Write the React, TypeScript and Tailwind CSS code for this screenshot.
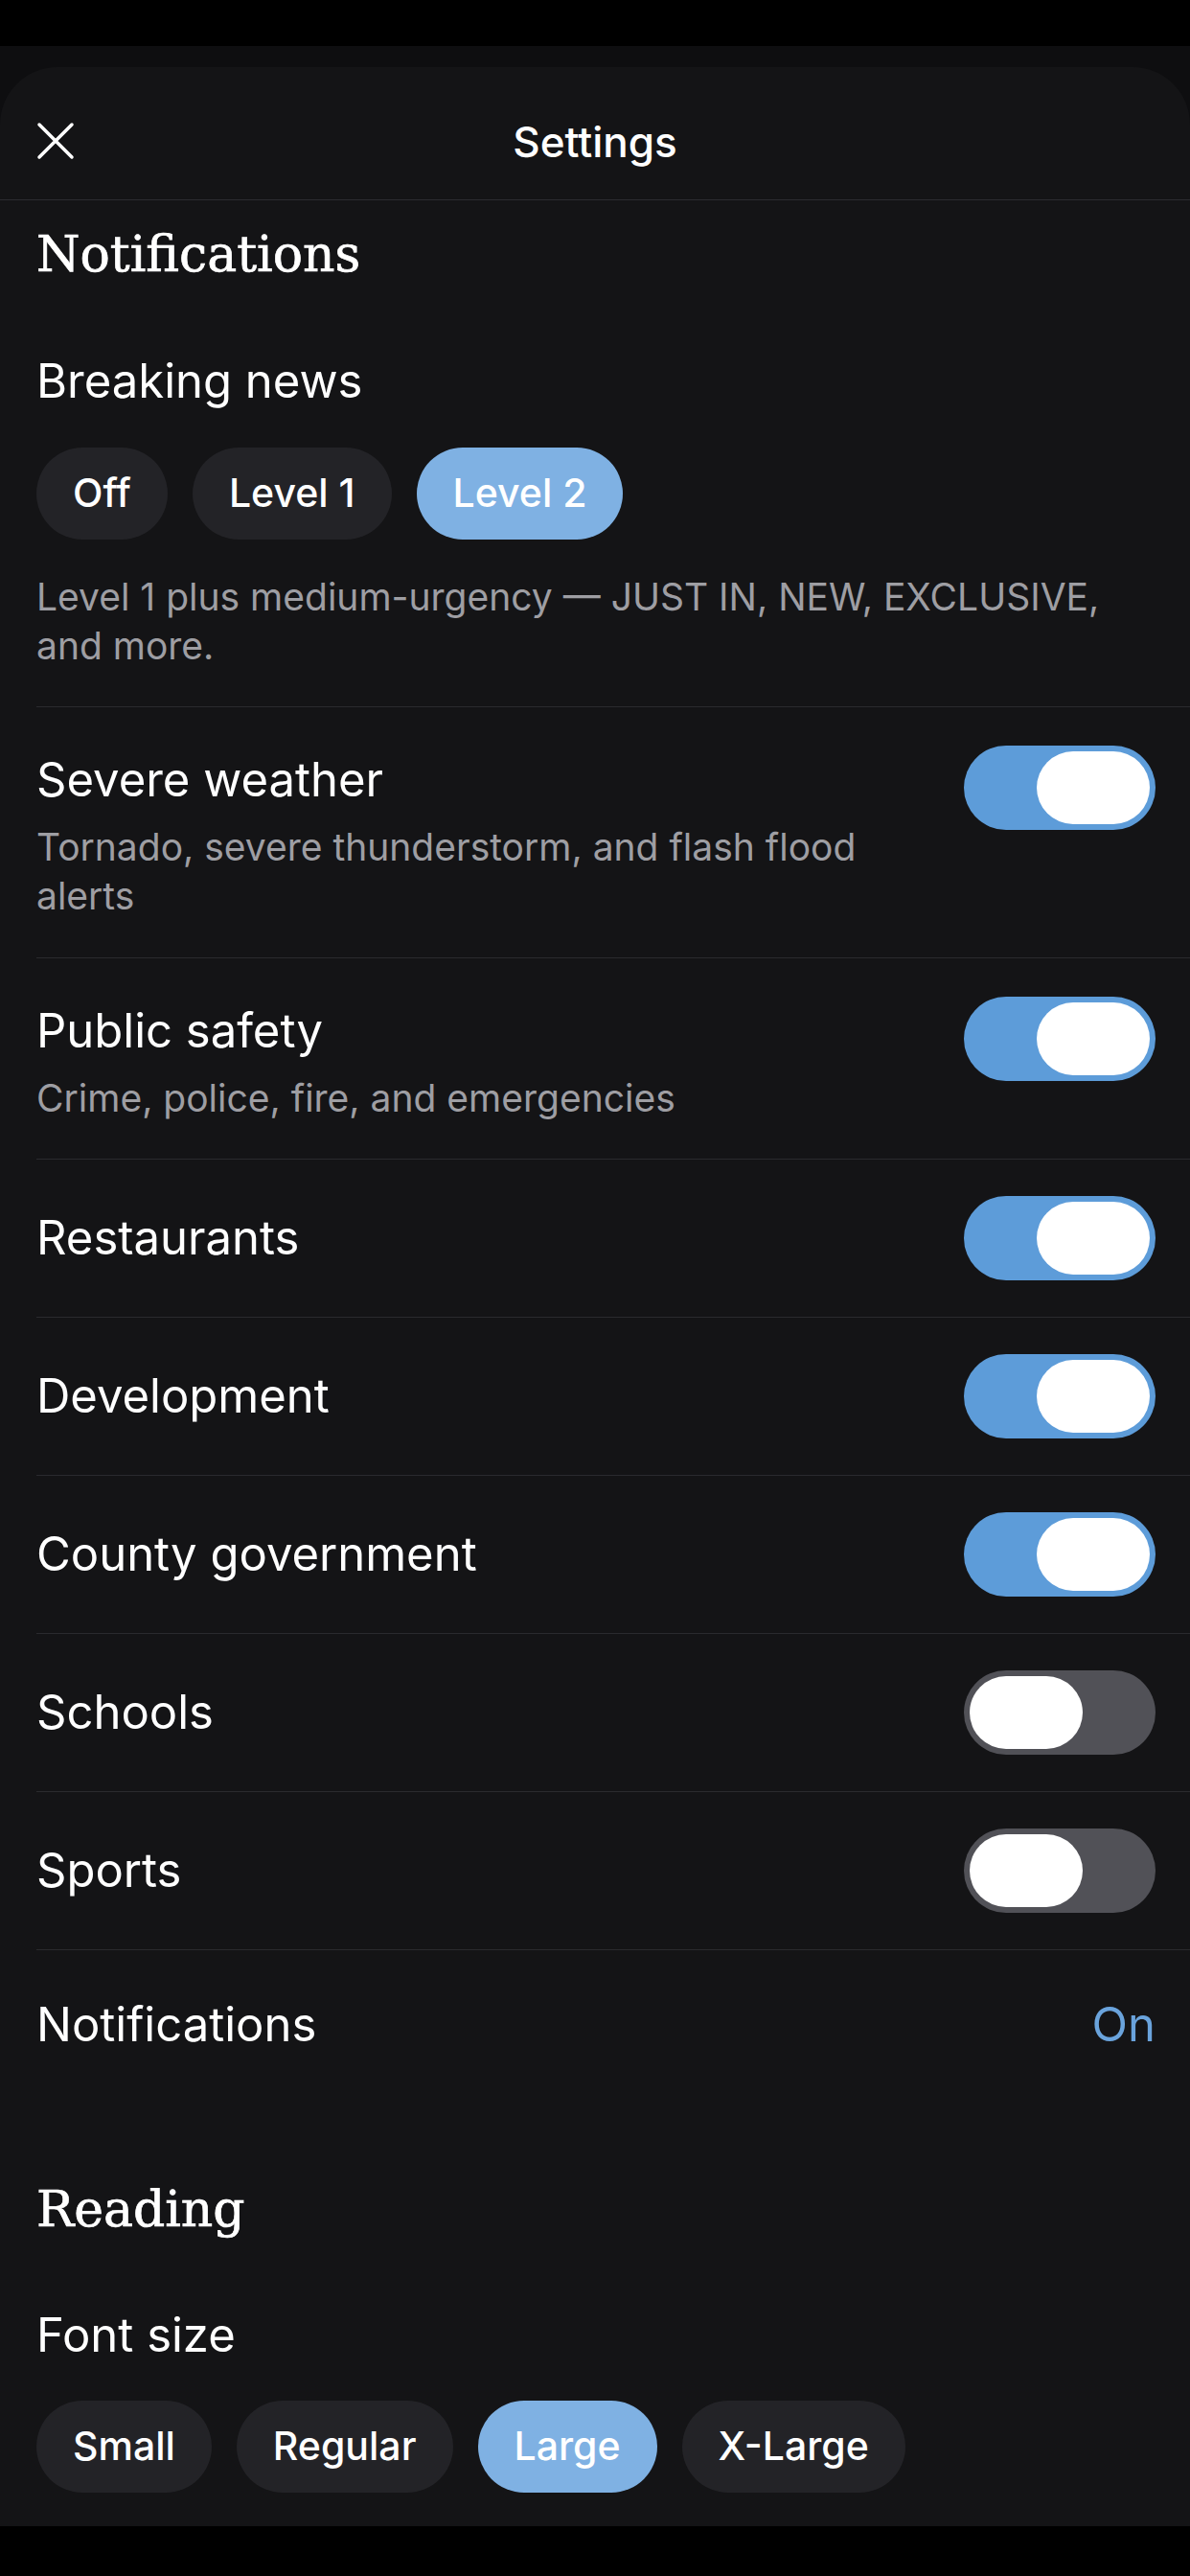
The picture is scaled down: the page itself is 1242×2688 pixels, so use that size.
import { useState } from 'react';

const sans = { fontFamily: 'Inter, "Noto Sans", sans-serif' };
const serif = { fontFamily: '"DejaVu Serif", serif' };

function Toggle({ on }: { on: boolean }) {
  return (
    <div
      className={`flex h-[88px] w-[200px] shrink-0 items-center rounded-full px-[6px] ${
        on ? 'justify-end bg-[#5d9cd9]' : 'justify-start bg-[#515157]'
      }`}
    >
      <div className="h-[76px] w-[118px] rounded-full bg-white" />
    </div>
  );
}

function Pills({ items, active }: { items: string[]; active: string }) {
  return (
    <div className="flex gap-[26px]">
      {items.map((item) => (
        <div
          key={item}
          className={`flex h-[96px] items-center rounded-full px-[38px] text-[41px] font-medium text-white ${
            item === active ? 'bg-[#7fb1e3]' : 'bg-[#232327]'
          }`}
        >
          {item}
        </div>
      ))}
    </div>
  );
}

const topics = [
  { label: 'Restaurants', on: true },
  { label: 'Development', on: true },
  { label: 'County government', on: true },
  { label: 'Schools', on: false },
  { label: 'Sports', on: false },
];

export default function App() {
  const [level] = useState('Level 2');

  return (
    <div className="h-[2688px] w-[1242px] overflow-hidden bg-black" style={sans}>
      <div className="mt-[48px] bg-[#0e0e10] pt-[22px]">
        <div className="rounded-t-[60px] bg-[#141416] text-white">
          <div className="grid h-[139px] grid-cols-[1fr_auto_1fr] items-center border-b border-[#2c2c30] px-[38px] pt-[18px]">
            <svg width="40" height="40" viewBox="0 0 40 40" className="mt-[-2px]">
              <path d="M3 3 L37 37 M37 3 L3 37" stroke="white" strokeWidth="3.5" strokeLinecap="round" />
            </svg>
            <p className="text-[44px] font-medium leading-[52px]">Settings</p>
            <div />
          </div>

          <div className="pl-[38px]">
            <h2 className="mt-[25px] text-[52px] leading-[62px] [-webkit-text-stroke:0.7px_white]" style={serif}>
              Notifications
            </h2>
            <p className="mt-[73px] text-[49px] leading-[58px]">Breaking news</p>
            <div className="mt-[40px]">
              <Pills items={['Off', 'Level 1', 'Level 2']} active={level} />
            </div>
            <p className="mt-[34px] pr-[36px] text-[39px] leading-[51px] text-[#9e9ea3]">
              Level 1 plus medium-urgency — JUST IN, NEW, EXCLUSIVE, and more.
            </p>

            <div className="mt-[38px] flex items-start justify-between border-t border-[#2a2a2e] pt-[40px] pr-[36px] pb-[39px]">
              <div className="pt-[7px]">
                <p className="text-[49px] leading-[58px]">Severe weather</p>
                <p className="mt-[15px] w-[900px] text-[39px] leading-[51px] text-[#9e9ea3]">
                  Tornado, severe thunderstorm, and flash flood alerts
                </p>
              </div>
              <Toggle on />
            </div>

            <div className="flex items-start justify-between border-t border-[#2a2a2e] pt-[40px] pr-[36px] pb-[38px]">
              <div className="pt-[7px]">
                <p className="text-[49px] leading-[58px]">Public safety</p>
                <p className="mt-[15px] text-[39px] leading-[51px] text-[#9e9ea3]">
                  Crime, police, fire, and emergencies
                </p>
              </div>
              <Toggle on />
            </div>

            {topics.map((t) => (
              <div
                key={t.label}
                className="flex items-center justify-between border-t border-[#2a2a2e] py-[38px] pr-[36px]"
              >
                <p className="text-[49px] leading-[58px]">{t.label}</p>
                <Toggle on={t.on} />
              </div>
            ))}

            <div className="flex items-center justify-between border-t border-[#2a2a2e] pt-[49px] pb-[47px] pr-[36px]">
              <p className="text-[49px] leading-[58px]">Notifications</p>
              <p className="text-[49px] leading-[58px] text-[#6aa3dc]">On</p>
            </div>

            <h2 className="mt-[85px] text-[52px] leading-[62px] [-webkit-text-stroke:0.7px_white]" style={serif}>
              Reading
            </h2>
            <p className="mt-[72px] text-[49px] leading-[58px]">Font size</p>
            <div className="mt-[39px] pb-[35px]">
              <Pills items={['Small', 'Regular', 'Large', 'X-Large']} active="Large" />
            </div>
          </div>
        </div>
      </div>
    </div>
  );
}
